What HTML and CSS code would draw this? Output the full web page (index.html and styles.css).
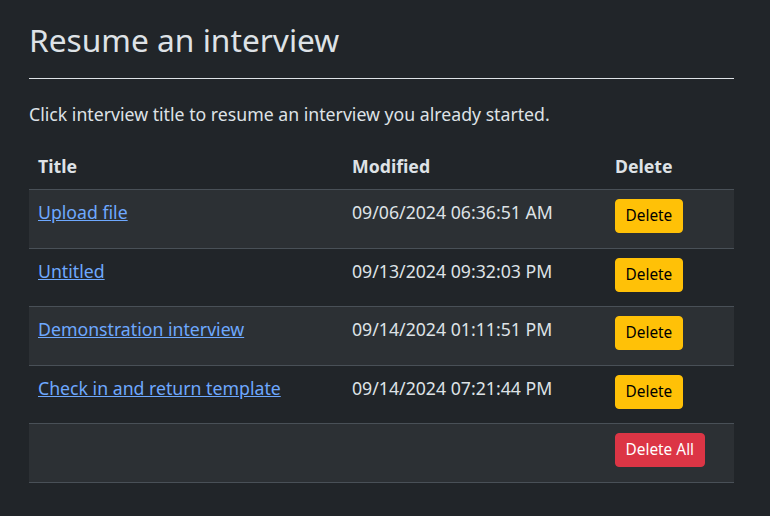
FILE: index.html
```html
<!DOCTYPE html>
<html lang="en">
<head>
<meta charset="utf-8">
<title>Resume an interview</title>
<link rel="stylesheet" href="styles.css">
</head>
<body>
<main class="page">
  <h1 class="title">Resume an interview</h1>
  <hr class="rule">
  <p class="intro">Click interview title to resume an interview you already started.</p>
  <table class="sessions">
    <thead>
      <tr>
        <th class="col-title">Title</th>
        <th class="col-mod">Modified</th>
        <th class="col-del">Delete</th>
      </tr>
    </thead>
    <tbody>
      <tr>
        <td><a href="#" class="link">Upload file</a></td>
        <td>09/06/2024 06:36:51 AM</td>
        <td><button class="btn btn-warning">Delete</button></td>
      </tr>
      <tr>
        <td><a href="#" class="link">Untitled</a></td>
        <td>09/13/2024 09:32:03 PM</td>
        <td><button class="btn btn-warning">Delete</button></td>
      </tr>
      <tr>
        <td><a href="#" class="link">Demonstration interview</a></td>
        <td>09/14/2024 01:11:51 PM</td>
        <td><button class="btn btn-warning">Delete</button></td>
      </tr>
      <tr>
        <td><a href="#" class="link">Check in and return template</a></td>
        <td>09/14/2024 07:21:44 PM</td>
        <td><button class="btn btn-warning">Delete</button></td>
      </tr>
      <tr>
        <td></td>
        <td></td>
        <td><button class="btn btn-danger">Delete All</button></td>
      </tr>
    </tbody>
  </table>
</main>
</body>
</html>
```
FILE: styles.css
```css
html, body {
  margin: 0;
  padding: 0;
  background: #212529;
  color: #dee2e6;
  font-family: "Noto Sans", "Open Sans", sans-serif;
  font-size: 17.7px;
  line-height: 1.5;
}
.page {
  width: 705px;
  padding: 0 0 0 29px;
}
.title {
  margin: 0;
  padding-top: 21px;
  font-size: 31.7px;
  font-weight: 400;
  line-height: 38px;
  color: #dee2e6;
}
.rule {
  margin: 19px 0 0 0;
  border: 0;
  border-top: 1px solid #dee2e6;
}
.intro {
  margin: 22px 0 0 0;
  line-height: 26.4px;
}
.sessions {
  margin-top: 16.5px;
  width: 705px;
  border-collapse: collapse;
  line-height: 26.4px;
}
.sessions th {
  text-align: left;
  font-weight: 700;
  padding: 9px 9px 10px;
  border-bottom: 1px solid #495057;
}
.sessions td {
  padding: 9px 9px 14.5px;
  vertical-align: top;
  border-bottom: 1px solid #495057;
}
.sessions tbody tr:nth-child(odd) td {
  background: #2c3034;
}
.col-title { width: 296px; }
.col-mod { width: 245px; }
.link {
  color: #6ea8fe;
  text-decoration: underline;
}
.btn {
  display: block;
  font-family: inherit;
  font-size: 15.4px;
  line-height: 22px;
  padding: 0 9.5px;
  border-radius: 4px;
  border: 1px solid transparent;
  height: 34px;
}
.btn-warning {
  background: #ffc107;
  border-color: #ffc107;
  color: #000;
}
.btn-danger {
  background: #dc3545;
  border-color: #dc3545;
  color: #fff;
}
```
